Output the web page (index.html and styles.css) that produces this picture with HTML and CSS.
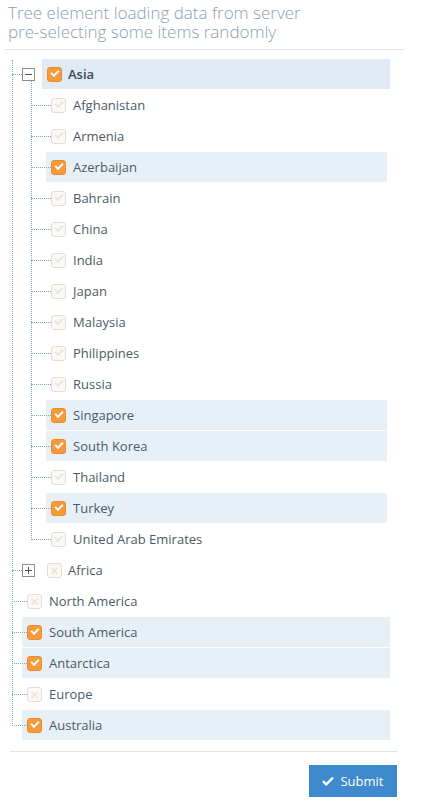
FILE: index.html
```html
<!DOCTYPE html>
<html lang="en">
<head>
  <meta charset="UTF-8">
  <meta name="viewport" content="width=device-width, initial-scale=1.0">
  <title>Tree</title>
  <link rel="stylesheet" href="styles.css">
</head>
<body>

<div class="widget">
  <!-- Header -->
  <div class="widget-header">
    <h4 class="widget-title">Tree element loading data from server<br>pre-selecting some items randomly</h4>
  </div>

  <!-- Tree -->
  <div class="widget-body">
    <ul class="tree">
      <li class="folder">
        <div class="row">
          <span class="toggle">
            <svg width="13" height="13" viewBox="0 0 13 13"><rect x="0.5" y="0.5" width="12" height="12" fill="#fff" stroke="#8c8c8c"/><path d="M3 6.5h7" stroke="#555" stroke-width="1"/></svg>
          </span>
          <div class="item selected hover"><span class="cb on"></span><span class="name bold">Asia</span></div>
        </div>
        <ul class="children">
          <li><div class="item"><span class="cb faded"></span><span class="name">Afghanistan</span></div></li>
          <li><div class="item"><span class="cb faded"></span><span class="name">Armenia</span></div></li>
          <li><div class="item selected"><span class="cb on"></span><span class="name">Azerbaijan</span></div></li>
          <li><div class="item"><span class="cb faded"></span><span class="name">Bahrain</span></div></li>
          <li><div class="item"><span class="cb faded"></span><span class="name">China</span></div></li>
          <li><div class="item"><span class="cb faded"></span><span class="name">India</span></div></li>
          <li><div class="item"><span class="cb faded"></span><span class="name">Japan</span></div></li>
          <li><div class="item"><span class="cb faded"></span><span class="name">Malaysia</span></div></li>
          <li><div class="item"><span class="cb faded"></span><span class="name">Philippines</span></div></li>
          <li><div class="item"><span class="cb faded"></span><span class="name">Russia</span></div></li>
          <li><div class="item selected"><span class="cb on"></span><span class="name">Singapore</span></div></li>
          <li><div class="item selected"><span class="cb on"></span><span class="name">South Korea</span></div></li>
          <li><div class="item"><span class="cb faded"></span><span class="name">Thailand</span></div></li>
          <li><div class="item selected"><span class="cb on"></span><span class="name">Turkey</span></div></li>
          <li><div class="item"><span class="cb faded"></span><span class="name">United Arab Emirates</span></div></li>
        </ul>
      </li>
      <li class="folder">
        <div class="row">
          <span class="toggle">
            <svg width="13" height="13" viewBox="0 0 13 13"><rect x="0.5" y="0.5" width="12" height="12" fill="#fff" stroke="#8c8c8c"/><path d="M3 6.5h7M6.5 3v7" stroke="#555" stroke-width="1"/></svg>
          </span>
          <div class="item"><span class="cb faded x"></span><span class="name">Africa</span></div>
        </div>
      </li>
      <li class="leaf"><div class="item"><span class="cb faded x"></span><span class="name">North America</span></div></li>
      <li class="leaf"><div class="item selected"><span class="cb on"></span><span class="name">South America</span></div></li>
      <li class="leaf"><div class="item selected"><span class="cb on"></span><span class="name">Antarctica</span></div></li>
      <li class="leaf"><div class="item"><span class="cb faded x"></span><span class="name">Europe</span></div></li>
      <li class="leaf"><div class="item selected"><span class="cb on"></span><span class="name">Australia</span></div></li>
    </ul>

    <!-- Footer -->
    <div class="widget-toolbox">
      <button class="btn-submit">
        <svg width="12" height="10" viewBox="0 0 12 10"><path d="M1 5.2l3.2 3.2L11 1.6" fill="none" stroke="#fff" stroke-width="2.4"/></svg>
        Submit
      </button>
    </div>
  </div>
</div>

</body>
</html>
```

FILE: styles.css
```css
/* Page */
body {
  margin: 0;
  background-color: #fff;
  font-family: "Open Sans", "Liberation Sans", sans-serif;
  font-size: 13px;
  color: #4c5a67;
}

.widget {
  width: 404px;
}

/* Header with title */
.widget-header {
  padding: 3px 8px 8px 8px;
  margin: 0 0 0 5px;
  border-bottom: 1px solid #dfe6ec;
}

.widget-title {
  margin: 0 0 0 -5px;
  font-size: 17px;
  font-weight: 300;
  line-height: 19px;
  color: #8aa0b3;
}

.widget-body {
  padding-top: 9px;
}

/* Tree */
ul {
  list-style: none;
  margin: 0;
  padding: 0;
}

.tree {
  position: relative;
  margin-left: 12px;
  width: 378px;
}

/* vertical dotted lines */
.tree::before,
.children::before {
  content: "";
  position: absolute;
  left: 0;
  top: 1px;
  bottom: 16px;
  border-left: 1px dotted #7aa6c8;
}

.children {
  position: relative;
  margin-left: 19px;
  margin-right: 3px;
}

.children::before {
  top: -9px;
}

li {
  position: relative;
}

/* horizontal dotted lines */
li::before {
  content: "";
  position: absolute;
  left: 0;
  top: 15px;
  width: 10px;
  border-top: 1px dotted #7aa6c8;
  z-index: 1;
}

li.leaf::before {
  width: 15px;
}

.children li::before {
  width: 20px;
}

.row {
  display: flex;
  align-items: center;
  padding-left: 10px;
}

.toggle {
  display: flex;
  width: 13px;
  height: 13px;
  margin-right: 7px;
}

.folder > .row .item {
  flex: 1;
}

.folder > .row .cb {
  margin-right: 6px;
}

li.leaf {
  padding-left: 10px;
}

.children li {
  padding-left: 15px;
}

.item {
  display: flex;
  align-items: center;
  height: 30px;
  margin-bottom: 1px;
  padding-left: 5px;
}

.item.selected {
  background-color: #e8f0f7;
}

.item.hover {
  background-color: #e0ebf5;
}

.name {
  line-height: 30px;
  white-space: nowrap;
}

.name.bold {
  font-weight: 600;
  color: #3c4a56;
}

/* Checkboxes */
.cb {
  position: relative;
  width: 15px;
  height: 15px;
  margin-right: 7px;
  border-radius: 3px;
  box-sizing: border-box;
  flex-shrink: 0;
}

.cb.on {
  background-color: #f69a3c;
  border: 1px solid #ee8c2c;
}

.cb.on::after {
  content: "";
  position: absolute;
  left: 3px;
  top: 2px;
  width: 6px;
  height: 3px;
  border-left: 2.5px solid #fff;
  border-bottom: 2.5px solid #fff;
  transform: rotate(-45deg);
}

.cb.faded {
  background-color: #fbf9f6;
  border: 1px solid #e3ddd6;
}

.cb.faded::after {
  content: "";
  position: absolute;
  left: 3px;
  top: 2.5px;
  width: 6px;
  height: 3px;
  border-left: 2px solid #ebe3d6;
  border-bottom: 2px solid #ebe3d6;
  transform: rotate(-45deg);
}

.cb.faded.x::after {
  content: "\00d7";
  left: 0;
  top: 0;
  width: 13px;
  height: 13px;
  border: none;
  transform: none;
  font-size: 14px;
  line-height: 13px;
  text-align: center;
  color: #f4d8c6;
}

/* Footer */
.widget-toolbox {
  display: flex;
  justify-content: flex-end;
  margin: 11px 7px 0 10px;
  padding-top: 13px;
  border-top: 1px solid #e2e2e2;
}

.btn-submit {
  display: flex;
  align-items: center;
  gap: 6px;
  width: 88px;
  height: 32px;
  justify-content: center;
  border: none;
  background-color: #3f8ace;
  color: #fff;
  font-family: "Open Sans", "Liberation Sans", sans-serif;
  font-size: 13px;
  cursor: pointer;
}
```
